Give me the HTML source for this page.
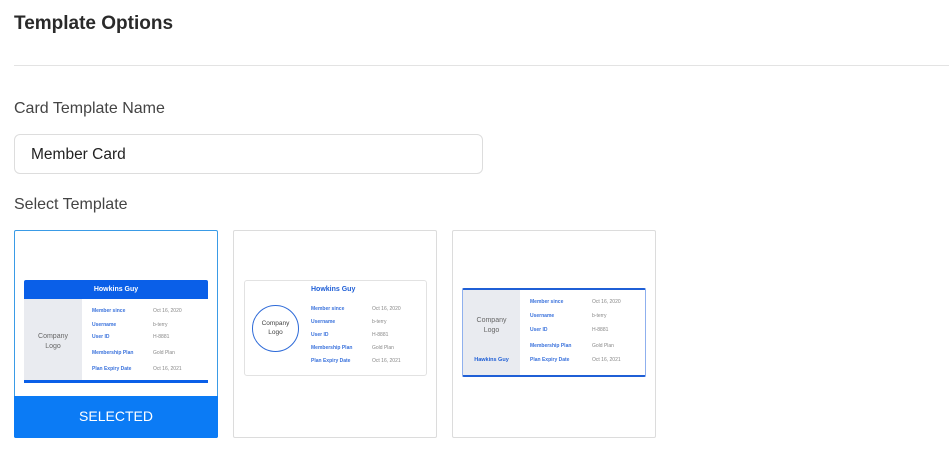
<!DOCTYPE html>
<html><head><meta charset="utf-8"><style>
*{margin:0;padding:0;box-sizing:border-box}
body{width:949px;height:453px;background:#fff;font-family:"Liberation Sans",sans-serif;position:relative;overflow:hidden;color:#333}
.a{position:absolute;white-space:nowrap}
.t{font-size:5px;line-height:6px}
.l{color:#3a72dc;font-weight:bold}
.v{color:#888}
.box{position:absolute;top:230px;width:204px;height:208px;border:1px solid #dcdcdc;border-radius:2px}
</style></head><body>
<div class="a" style="left:14px;top:13px;font-size:19px;font-weight:bold;color:#2a2a2a">Template Options</div>
<div class="a" style="left:14px;top:65px;width:935px;height:1px;background:#e3e3e3"></div>
<div class="a" style="left:14px;top:100px;font-size:16px;color:#444">Card Template Name</div>
<div class="a" style="left:14px;top:134px;width:469px;height:40px;border:1px solid #ddd;border-radius:6px"></div>
<div class="a" style="left:31px;top:146px;font-size:15.5px;color:#222">Member Card</div>
<div class="a" style="left:14px;top:196px;font-size:16px;color:#444">Select Template</div>

<!-- card 1 -->
<div class="box" style="left:14px;border-color:#3a9be6"></div>
<div class="a" style="left:24px;top:280px;width:184px;height:19px;background:#0a5fe8;border-radius:2px 2px 0 0"></div>
<div class="a" style="left:24px;top:286px;width:184px;text-align:center;color:#fff;font-size:7px;font-weight:bold">Howkins Guy</div>
<div class="a" style="left:24px;top:299px;width:58px;height:82px;background:#e9ebf0"></div>
<div class="a" style="left:24px;top:332px;width:58px;text-align:center;font-size:7px;line-height:10px;color:#666">Company<br>Logo</div>
<div class="a" style="left:24px;top:380px;width:184px;height:3px;background:#0a5fe8"></div>
<div class="a t l" style="left:92px;top:308px">Member since</div><div class="a t v" style="left:153px;top:308px">Oct 16, 2020</div>
<div class="a t l" style="left:92px;top:322px">Username</div><div class="a t v" style="left:153px;top:322px">b-terry</div>
<div class="a t l" style="left:92px;top:334px">User ID</div><div class="a t v" style="left:153px;top:334px">H-8881</div>
<div class="a t l" style="left:92px;top:350px">Membership Plan</div><div class="a t v" style="left:153px;top:350px">Gold Plan</div>
<div class="a t l" style="left:92px;top:366px">Plan Expiry Date</div><div class="a t v" style="left:153px;top:366px">Oct 16, 2021</div>
<div class="a" style="left:14px;top:396px;width:204px;height:42px;background:#0b7bf5;border-radius:0 0 2px 2px"></div>
<div class="a" style="left:14px;top:408px;width:204px;text-align:center;color:#fff;font-size:14px">SELECTED</div>

<!-- card 2 -->
<div class="box" style="left:233px"></div>
<div class="a" style="left:244px;top:280px;width:183px;height:96px;border:1px solid #e2e2e2;border-radius:3px"></div>
<div class="a" style="left:252px;top:305px;width:47px;height:47px;border:1.5px solid #2d6ad8;border-radius:50%"></div>
<div class="a" style="left:252px;top:319px;width:47px;text-align:center;font-size:6.5px;line-height:9px;color:#444">Company<br>Logo</div>
<div class="a" style="left:311px;top:286px;font-size:7px;font-weight:bold;color:#1f5fd6">Howkins Guy</div>
<div class="a t l" style="left:311px;top:306px">Member since</div><div class="a t v" style="left:372px;top:306px">Oct 16, 2020</div>
<div class="a t l" style="left:311px;top:319px">Username</div><div class="a t v" style="left:372px;top:319px">b-terry</div>
<div class="a t l" style="left:311px;top:332px">User ID</div><div class="a t v" style="left:372px;top:332px">H-8881</div>
<div class="a t l" style="left:311px;top:345px">Membership Plan</div><div class="a t v" style="left:372px;top:345px">Gold Plan</div>
<div class="a t l" style="left:311px;top:358px">Plan Expiry Date</div><div class="a t v" style="left:372px;top:358px">Oct 16, 2021</div>

<!-- card 3 -->
<div class="box" style="left:452px"></div>
<div class="a" style="left:462px;top:288px;width:184px;height:89px;border:1px solid #8fb0ee;border-top:2px solid #1f5fd6;border-bottom:2px solid #1f5fd6;border-radius:2px"></div>
<div class="a" style="left:463px;top:290px;width:57px;height:85px;background:#e9ebf0"></div>
<div class="a" style="left:463px;top:316px;width:57px;text-align:center;font-size:7px;line-height:10px;color:#666">Company<br>Logo</div>
<div class="a" style="left:463px;top:357px;width:57px;text-align:center;font-size:5.5px;font-weight:bold;color:#1f5fd6">Hawkins Guy</div>
<div class="a t l" style="left:530px;top:299px">Member since</div><div class="a t v" style="left:592px;top:299px">Oct 16, 2020</div>
<div class="a t l" style="left:530px;top:313px">Username</div><div class="a t v" style="left:592px;top:313px">b-terry</div>
<div class="a t l" style="left:530px;top:327px">User ID</div><div class="a t v" style="left:592px;top:327px">H-8881</div>
<div class="a t l" style="left:530px;top:343px">Membership Plan</div><div class="a t v" style="left:592px;top:343px">Gold Plan</div>
<div class="a t l" style="left:530px;top:357px">Plan Expiry Date</div><div class="a t v" style="left:592px;top:357px">Oct 16, 2021</div>
</body></html>
